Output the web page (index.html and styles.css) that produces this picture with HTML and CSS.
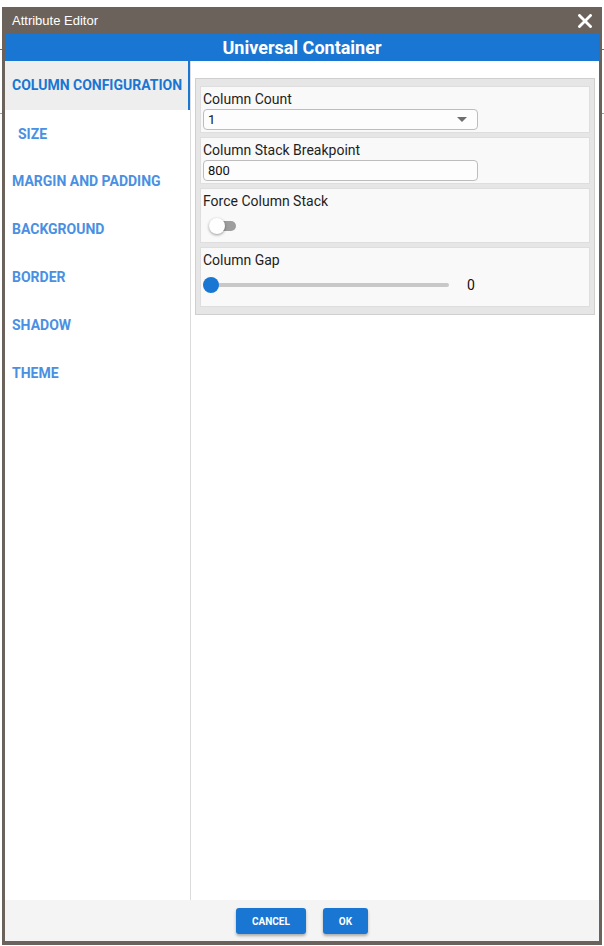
FILE: index.html
```html
<!DOCTYPE html>
<html lang="en">
<head>
<meta charset="utf-8">
<title>Attribute Editor</title>
<link rel="stylesheet" href="styles.css">
</head>
<body>
<div class="page">
  <div class="page-line line-a"></div>
  <div class="page-line line-b"></div>
</div>
<div class="dialog">
  <div class="titlebar">
    <span class="title">Attribute Editor</span>
    <span class="close" aria-label="Close">
      <svg width="14" height="14" viewBox="0 0 14 14"><path d="M1.5 1.5 L12.5 12.5 M12.5 1.5 L1.5 12.5" stroke="#fff" stroke-width="2.8" stroke-linecap="square" fill="none"/></svg>
    </span>
  </div>
  <div class="header">Universal Container</div>
  <div class="body">
    <nav class="sidebar">
      <div class="nav-item active">COLUMN CONFIGURATION</div>
      <div class="nav-item indent">SIZE</div>
      <div class="nav-item">MARGIN AND PADDING</div>
      <div class="nav-item">BACKGROUND</div>
      <div class="nav-item">BORDER</div>
      <div class="nav-item">SHADOW</div>
      <div class="nav-item">THEME</div>
    </nav>
    <main class="content">
      <div class="group">
        <div class="card">
          <div class="label">Column Count</div>
          <div class="field select">
            <span>1</span>
            <span class="arrow"></span>
          </div>
        </div>
        <div class="card">
          <div class="label">Column Stack Breakpoint</div>
          <div class="field"><span>800</span></div>
        </div>
        <div class="card card-toggle">
          <div class="label">Force Column Stack</div>
          <div class="toggle-row">
            <div class="track"><div class="knob"></div></div>
          </div>
        </div>
        <div class="card card-slider">
          <div class="label">Column Gap</div>
          <div class="slider-row">
            <div class="slider"><div class="thumb"></div></div>
            <span class="value">0</span>
          </div>
        </div>
      </div>
    </main>
  </div>
  <div class="footer">
    <button class="btn">CANCEL</button>
    <button class="btn">OK</button>
  </div>
</div>
</body>
</html>
```
FILE: styles.css
```css
* { box-sizing: border-box; }
html, body { margin: 0; padding: 0; background: #fff; }
body { width: 604px; height: 946px; overflow: hidden; font-family: Roboto, "Liberation Sans", Arial, sans-serif; }

.page { position: relative; width: 604px; height: 946px; }
.page-line { position: absolute; left: 0; right: 0; height: 1px; }
.line-a { top: 49px; background: #2f7fc8; }
.line-b { top: 113px; background: #7fa7cc; }

.dialog {
  position: absolute;
  top: 7px; left: 2px;
  width: 600px; height: 938px;
  border: 3px solid #6b635b;
  border-top: 0;
  border-bottom-width: 4px;
  background: #fff;
  display: flex;
  flex-direction: column;
}

.titlebar {
  height: 27px;
  margin: 0 -3px;
  padding: 0 10px 0 10px;
  background: #6b635b;
  display: flex;
  align-items: center;
  justify-content: space-between;
  flex: none;
}
.title { font-family: "Liberation Sans", Arial, sans-serif; font-size: 13px; color: #fff; }
.close { display: flex; width: 14px; height: 14px; }

.header {
  height: 27px;
  flex: none;
  background: #1976d2;
  color: #fff;
  font-weight: 700;
  font-size: 18px;
  display: flex;
  align-items: center;
  justify-content: center;
}

.body { flex: 1; display: flex; min-height: 0; }

.sidebar { width: 186px; flex: none; border-right: 1px solid #dcdcdc; }
.nav-item {
  height: 48px;
  display: flex;
  align-items: center;
  padding-left: 7px;
  font-size: 14px;
  font-weight: 700;
  color: #4a90e2;
}
.nav-item.active { background: #eeeeee; color: #1976d2; border-right: 2px solid #1976d2; height: 49px; padding-bottom: 1px; }
.nav-item.indent { padding-left: 13px; height: 47px; }

.content { flex: 1; padding: 17px 4px 0 4px; }
.group {
  border: 1px solid #cfcfcf;
  background: #e6e6e6;
  padding: 7px 4px;
  display: flex;
  flex-direction: column;
  gap: 4px;
}
.card {
  border: 1px solid #dedede;
  background: #f9f9f9;
  padding: 3px 2px 1px 2px;
}
.label { font-size: 14px; line-height: 18px; color: #1e1e1e; margin-bottom: 1px; }

.field {
  width: 275px;
  height: 21px;
  border: 1px solid #bdbdbd;
  border-radius: 4px;
  background: #fdfdfd;
  display: flex;
  align-items: center;
  justify-content: space-between;
  padding: 0 10px 0 4px;
  font-size: 13px;
  color: #111;
  margin-bottom: 1px;
}
.arrow {
  width: 0; height: 0;
  border-left: 5px solid transparent;
  border-right: 5px solid transparent;
  border-top: 5px solid #6e6e6e;
}

.toggle-row { height: 30px; display: flex; align-items: center; padding-left: 9px; }
.track { position: relative; width: 24px; height: 10px; border-radius: 5px; background: #9e9e9e; }
.knob {
  position: absolute;
  left: -3px; top: -3px;
  width: 16px; height: 16px;
  border-radius: 50%;
  background: #fff;
  box-shadow: 0 1px 3px rgba(0,0,0,0.4);
}

.card-slider { padding-bottom: 7px; }
.slider-row { height: 29px; display: flex; align-items: center; gap: 18px; }
.slider { position: relative; width: 246px; height: 4px; border-radius: 2px; background: #c8c8c8; }
.thumb {
  position: absolute;
  left: 0; top: -6px;
  width: 16px; height: 16px;
  border-radius: 50%;
  background: #1976d2;
}
.value { font-size: 14px; color: #111; }

.footer {
  height: 41px;
  flex: none;
  background: #f4f4f4;
  display: flex;
  justify-content: center;
  align-items: flex-start;
  padding-top: 8px;
  gap: 17px;
}
.btn {
  height: 26px;
  padding: 0 16px;
  border: 0;
  border-radius: 3px;
  background: #1976d2;
  color: #fff;
  font-family: Roboto, "Liberation Sans", Arial, sans-serif;
  font-weight: 700;
  font-size: 10px;
  box-shadow: 0 2px 3px rgba(0,0,0,0.3);
}
```
